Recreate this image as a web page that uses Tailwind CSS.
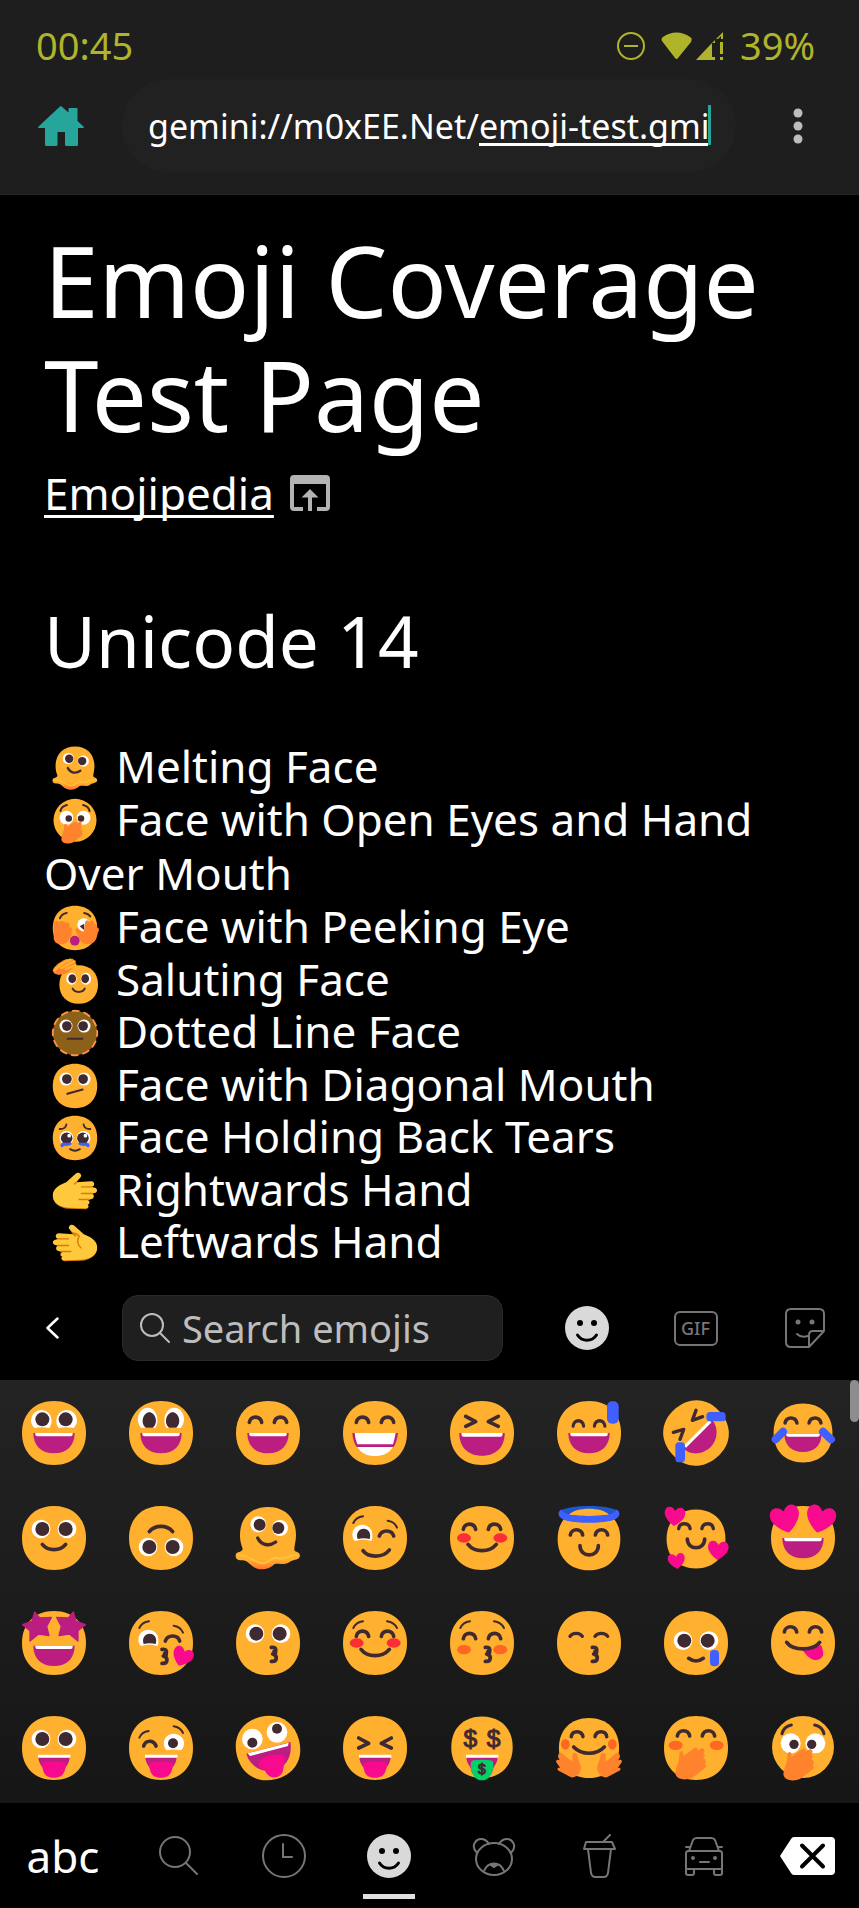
<!DOCTYPE html>
<html lang="en">
<head>
  <meta charset="UTF-8">
  <meta name="viewport" content="width=device-width, initial-scale=1">
  <title>Emoji Coverage Test Page</title>
  <script src="https://cdn.jsdelivr.net/npm/@tailwindcss/browser@4"></script>
</head>
<body class="bg-black text-white font-['Noto_Sans','Open_Sans',sans-serif] min-h-screen flex flex-col">

  <!-- shared emoji parts, drawn around 0,0 -->
  <svg class="absolute size-0" aria-hidden="true">
    <defs>
      <linearGradient id="goo" gradientUnits="userSpaceOnUse" x1="0" y1="40" x2="0" y2="96">
        <stop offset="0" stop-color="#FFB02E"/><stop offset=".45" stop-color="#FFB02E"/><stop offset="1" stop-color="#FF6F2D"/>
      </linearGradient>
      <path id="face" fill="#FFB02E" d="M0-96C58-96 96-58 96 0S58 96 0 96-96 58-96 0-58-96 0-96Z"/>
      <g id="eyes">
        <circle cx="-39" cy="0" r="28" fill="#fff"/><circle cx="39" cy="0" r="28" fill="#fff"/>
        <circle cx="-35" cy="0" r="21" fill="#402A32"/><circle cx="35" cy="0" r="21" fill="#402A32"/>
      </g>
      <path id="arcs" fill="none" stroke="#402A32" stroke-width="11" stroke-linecap="round" d="M-56 0C-53-21-23-21-19 0M19 0C23-21 53-21 56 0"/>
      <path id="squint" fill="none" stroke="#402A32" stroke-width="11" stroke-linecap="round" stroke-linejoin="round" d="M-49-50L-19-34L-49-20M49-50L19-34L49-20"/>
      <path id="brows" fill="none" stroke="#402A32" stroke-width="6" stroke-linecap="round" d="M-65-45Q-57-62-36-65M36-65Q57-62 66-45"/>
      <g id="laugh">
        <path fill="#BB1D80" d="M-62 0H62C62 38 38 61 0 61S-62 38-62 0Z"/>
        <path fill="#fff" d="M-56 0H56V4Q56 10 50 10H-50Q-56 10-56 4Z"/>
      </g>
      <path id="kiss" fill="none" stroke="#402A32" stroke-width="11" stroke-linecap="round" stroke-linejoin="round" d="M0 0C16-3 18 14 4 20C20 24 18 44 0 42M4 20C16 18 14 14 8 12"/>
      <path id="heart" fill="#F70A8D" d="M0 28C-14 20-31 4-31-11C-31-32-8-34 0-17C8-34 31-32 31-11C31 4 14 20 0 28Z"/>
      <path id="star" fill="#BB1D80" stroke="#BB1D80" stroke-width="4" stroke-linejoin="round" d="M-58-93L-43-75L-8-77L-22-50L-15-22L-46-27L-72-6L-72-37L-94-55L-66-66Z"/>
      <g id="tongue">
        <path fill="#BB1D80" d="M-47 26H47C46 44 38 56 28 64H-28C-38 56-46 44-47 26Z"/>
        <path fill="#fff" d="M-48 20H49V29H-48Z"/>
        <path fill="#F70A8D" d="M-37 50C-38 36 38 36 37 50C32 60 36 89 0 89S-32 60-37 50Z"/>
      </g>
      <g id="winkeye">
        <path fill="#fff" d="M-60 9C-65 4-68-3-68-10A30 30 0 0 1-8-10C-8-3-8 4-11 9Q-36 0-60 9Z"/>
        <path fill="#402A32" d="M-52 3C-58-14-48-28-34-28S-10-14-16 3Q-34-1-52 3Z"/>
      </g>
      <g id="melt">
        <path fill="url(#goo)" d="M0-93C52-93 84-60 84-8C84 12 78 26 79 36C82 44 96 40 96 54C94 66 78 64 68 70C52 84 40 74 20 78C5 94-20 98-38 90C-58 78-64 64-80 67C-94 68-100 58-96 48C-94 40-78 44-76 32C-80 20-84 10-84-8C-84-60-52-93 0-93Z"/>
        <path fill="none" stroke="#FFC23A" stroke-width="6" stroke-linecap="round" d="M-88 52C-58 46-42 78-14 76C10 72 8 56 28 60C50 68 62 50 86 52"/>
        <circle cx="-29" cy="-41" r="24" fill="#fff"/><circle cx="-25" cy="-40" r="18" fill="#402A32"/>
        <circle cx="36" cy="-30" r="24" fill="#fff"/><circle cx="31" cy="-30" r="18" fill="#402A32"/>
        <path fill="none" stroke="#402A32" stroke-width="10" stroke-linecap="round" d="M-31 0C-20 22 4 26 23 12"/>
      </g>
      <path id="palm" fill="#FF822D" d="M-50 20C-50 4-34 6-38 24L-8 2C0-5 8 0 4 8L14 2C24-3 30 8 21 16C28 18 28 28 20 30C32 34 30 44 26 47C32 53 30 58 24 62L-12 90C-30 98-60 96-62 76C-60 56-50 44-50 20Z"/>
      <path id="hug" fill="#FF822D" d="M-50 24C-52 12-34 12-34 24C-34 36-22 50-25 66C-28 80-42 90-54 88L-88 70C-98 66-96 56-86 60L-96 46C-102 38-96 32-88 37L-93 26C-92 12-84 12-78 18L-52 40Q-48 34-50 24Z"/>
      <g id="gasp">
        <circle cx="0" cy="-3" r="93" fill="#FFB02E"/>
        <path fill="none" stroke="#402A32" stroke-width="9" stroke-linecap="round" d="M-63-43Q-58-64-35-69M35-69Q58-64 63-43"/>
        <circle cx="-37" cy="-14" r="30" fill="#fff"/><circle cx="37" cy="-14" r="30" fill="#fff"/>
        <circle cx="-27" cy="-11" r="14" fill="#402A32"/><circle cx="26" cy="-11" r="14" fill="#402A32"/>
        <use href="#palm" x="3" y="3"/>
      </g>
      <g id="hand">
        <path fill="#D67D00" d="M-96 24C-94 50-70 76-24 77L48 79Q58 78 58 66L-20 50Z"/>
        <path fill="#FFC83D" d="M-96 18C-96-16-56-30-38-38L4-76C18-86 34-70 23-58L6-38L70-42C86-42 88-20 72-18L84-14C100-12 98 8 84 9L72 12C86 14 84 34 70 35L56 40C66 44 64 58 54 59C62 64 58 74 48 74L-20 72C-66 72-96 50-96 18Z"/>
        <path fill="none" stroke="#D67D00" stroke-width="6" stroke-linecap="round" d="M6-38L-2-30M28-18H74M28 11H76M18 37H62"/>
      </g>
      <g id="smiley">
        <circle cx="22" cy="22" r="22" fill="#D9D9D9"/>
        <circle cx="15" cy="17" r="3" fill="#000"/><circle cx="29" cy="17" r="3" fill="#000"/>
        <path d="M12.500 29C17 36 27 36 31.500 29" fill="none" stroke="#000" stroke-width="3" stroke-linecap="round"/>
      </g>
    </defs>
  </svg>

  <header class="bg-[#1e1e1e] border-b border-[#262626] pb-[22px]">
    <div class="flex items-center justify-between h-[79px] pt-3 pl-9 pr-11 text-[38px] text-[#afb42b]">
      <span>00:45</span>
      <div class="flex items-center">
        <svg class="size-7 mr-4" viewBox="0 0 28 28" fill="none" stroke="currentColor" stroke-width="2"><circle cx="14" cy="14" r="13"/><path d="M7 14h14"/></svg>
        <svg class="w-[31px] h-7 mr-1" viewBox="0 0 31 28" fill="currentColor"><path d="M1 9C0 7 1 6 2 5C10-1 21-1 29 5C31 6 31 8 30 10L17 26Q15.500 28 14 26Z"/></svg>
        <svg class="size-7 mr-4" viewBox="0 0 28 28" fill="currentColor"><path d="M0 28L14 13L19 8V11H16V25H19V28ZM20 7L27 0V7H25V4L22 7Z"/><path d="M24 10h3v12h-3zM24 25h3v3h-3z"/></svg>
        <span>39%</span>
      </div>
    </div>
    <div class="flex items-stretch h-[93px]">
      <button class="w-[122px] flex items-center justify-center" aria-label="Home">
        <svg class="w-[46px] h-10" viewBox="0 0 46 40" fill="#26a69a"><path d="M23 0L30.500 6.500V3Q30.500 2 31.500 2H38.500Q39.500 2 39.500 3V15L46 21Q46 22 45 22H40V38.500Q40 40 38.500 40H28.500Q27 40 27 38.500V26H19.500V38.500Q19.500 40 18 40H8.500Q7 40 7 38.500V22H1Q0 22 0 21L22 0.500Z"/></svg>
      </button>
      <div class="relative flex-1 min-w-0 rounded-full bg-[#212121]">
        <input type="text" aria-label="Address" value="gemini://m0xEE.Net/emoji-test.gmi" class="w-full h-full bg-transparent pl-[26px] text-[34px] outline-none">
        <span class="absolute left-[357px] top-16 w-[229px] h-[3px] bg-white"></span>
        <span class="absolute left-[586px] top-[26px] w-[3px] h-10 bg-[#26a69a]"></span>
      </div>
      <button class="w-[123px] flex items-center justify-center" aria-label="Menu">
        <svg class="w-[10px] h-9" viewBox="0 0 10 36" fill="#bdbdbd"><circle cx="5" cy="5" r="4.500"/><circle cx="5" cy="18" r="4.500"/><circle cx="5" cy="31" r="4.500"/></svg>
      </button>
    </div>
  </header>

  <main class="flex-1 px-11 pt-7 text-[44px]">
    <h1 class="text-[98px] leading-[114px]">Emoji Coverage Test Page</h1>
    <p class="mt-3 leading-[60px] flex items-center gap-4">
      <a href="https://emojipedia.org" class="underline decoration-[3px] underline-offset-[5px] [text-decoration-skip-ink:none]">Emojipedia</a>
      <svg class="w-10 h-9" viewBox="0 0 40 36" fill="#b3b3b3"><path d="M4 0H36Q40 0 40 4V32Q40 36 36 36H27V32H36V9H4V32H13V36H4Q0 36 0 32V4Q0 0 4 0Z"/><path d="M20 14L28.500 22.500H22V36H18V22.500H11.500Z"/></svg>
    </p>
    <h2 class="mt-[76px] text-[71px] leading-[84px]">Unicode 14</h2>
    <ul class="mt-[57px]">
      <li class="leading-[52px]"><svg class="inline-block size-[50px] ml-[6px] mr-4 -my-2 align-[-2px]" viewBox="-108 -108 216 216"><use href="#melt"/></svg>Melting Face</li>
      <li class="leading-[54px]"><svg class="inline-block size-[50px] ml-[6px] mr-4 -my-2 align-[-2px]" viewBox="-108 -108 216 216"><use href="#gasp"/></svg>Face with Open Eyes and Hand Over Mouth</li>
      <li class="leading-[53px]"><svg class="inline-block size-[50px] ml-[6px] mr-4 -my-2 align-[-2px]" viewBox="-108 -108 216 216">
        <use href="#face"/>
        <path fill="none" stroke="#402A32" stroke-width="9" stroke-linecap="round" d="M-65-42Q-58-62-36-65M40-65Q57-62 66-50"/>
        <circle cx="38" cy="-14" r="28" fill="#fff"/><path fill="#402A32" d="M20-8L40-18V10Z"/>
        <path fill="#FF822D" d="M-92-22C-88-34-74-30-66-24C-60-32-48-32-42-22C-30-28-18-16-26-4C-12-2-8 8-16 16C-8 30-22 40-26 52C-40 76-86 78-92 46Z"/>
        <path fill="#FF822D" d="M40 6L44-26C52-38 60-34 62-24C68-38 84-34 82-16C90-20 98-14 95-2C108 0 104 14 98 22C94 50 84 72 52 70C30 68 22 58 14 36L2 12C0 0 12-2 18 8L36 20Z"/>
        <circle cx="-1" cy="55" r="21" fill="#BB1D80"/></svg>Face with Peeking Eye</li>
      <li class="leading-[52px]"><svg class="inline-block size-[50px] ml-[6px] mr-4 -my-2 align-[-2px]" viewBox="-108 -108 216 216">
        <use href="#face" transform="translate(16 15) scale(.87)"/>
        <use href="#eyes" transform="translate(16 -10) scale(.8 .92)"/>
        <path fill="none" stroke="#402A32" stroke-width="9" stroke-linecap="round" d="M-10 33C0 52 32 52 42 33"/>
        <path fill="#FF822D" d="M-96-46C-92-64-64-84-40-94L-8-96L6-72L-4-60L-30-38C-50-24-80-24-92-36Z"/>
        <path fill="none" stroke="#FFB02E" stroke-width="11" stroke-linecap="round" d="M-88-46Q-66-72-40-84L-20-92M-58-56Q-30-74-2-84M-40-52L2-68"/></svg>Saluting Face</li>
      <li class="leading-[53px]"><svg class="inline-block size-[50px] ml-[6px] mr-4 -my-2 align-[-2px]" viewBox="-108 -108 216 216">
        <circle r="96" fill="#8C6019"/><circle r="96" fill="none" stroke="#FF9148" stroke-width="8" stroke-dasharray="27 23.270" stroke-linecap="round" stroke-dashoffset="13"/>
        <use href="#eyes" y="-30"/><path stroke="#402A32" stroke-width="9" stroke-linecap="round" d="M-32 25H32"/></svg>Dotted Line Face</li>
      <li class="leading-[52px]"><svg class="inline-block size-[50px] ml-[6px] mr-4 -my-2 align-[-2px]" viewBox="-108 -108 216 216">
        <use href="#face"/><use href="#eyes" y="-30"/><path stroke="#402A32" stroke-width="9" stroke-linecap="round" d="M-33 34L33 15"/></svg>Face with Diagonal Mouth</li>
      <li class="leading-[53px]"><svg class="inline-block size-[50px] ml-[6px] mr-4 -my-2 align-[-2px]" viewBox="-108 -108 216 216">
        <use href="#face"/>
        <circle cx="-37" cy="0" r="30" fill="#fff"/><circle cx="37" cy="0" r="30" fill="#fff"/>
        <circle cx="-36" cy="1" r="25" fill="#402A32"/><circle cx="34" cy="1" r="25" fill="#402A32"/>
        <circle cx="-25" cy="-10" r="8" fill="#fff"/><circle cx="45" cy="-10" r="8" fill="#fff"/>
        <path fill="#3F5FFF" d="M-54 20H-20Q-10 22-16 28Q-24 36-48 34L-50 38Q-60 44-63 32Q-62 22-54 20ZM54 20H20Q10 22 16 28Q24 36 48 34L50 38Q60 44 63 32Q62 22 54 20Z"/>
        <path fill="none" stroke="#402A32" stroke-width="8" stroke-linecap="round" d="M-66-39C-50-38-40-44-37-59M66-39C50-38 40-44 37-59M-21 48Q0 62 21 48"/></svg>Face Holding Back Tears</li>
      <li class="leading-[52px]"><svg class="inline-block size-[50px] ml-[6px] mr-4 -my-2 align-[-2px]" viewBox="-108 -108 216 216"><use href="#hand"/></svg>Rightwards Hand</li>
      <li class="leading-[53px]"><svg class="inline-block size-[50px] ml-[6px] mr-4 -my-2 align-[-2px]" viewBox="-108 -108 216 216">
        <use href="#hand" transform="scale(-1 1)"/>
        <path fill="none" stroke="#D67D00" stroke-width="6" stroke-linecap="round" d="M-12-44Q6-42 18-30Q2-2 25 21"/></svg>Leftwards Hand</li>
    </ul>
  </main>

  <section aria-label="Emoji keyboard">
    <div class="flex items-center h-[104px]">
      <button class="w-[104px] h-full flex items-center justify-center" aria-label="Back">
        <svg class="w-[13px] h-[22px]" viewBox="0 0 13 22" fill="none" stroke="#fff" stroke-width="2.500" stroke-linecap="round" stroke-linejoin="round"><path d="M11.500 1.500L1.500 11L11.500 20.500"/></svg>
      </button>
      <label class="ml-[18px] mr-[29px] flex-1 min-w-0 h-[66px] flex items-center gap-3 pl-[17px] rounded-2xl border border-[#2a2a2a] bg-[#1f1f1f]">
        <svg class="size-[30px] shrink-0" viewBox="0 0 30 30" fill="none" stroke="#bdbdbd" stroke-width="2" stroke-linecap="round"><circle cx="12" cy="12" r="11"/><path d="M20 20L29 29"/></svg>
        <input type="text" placeholder="Search emojis" aria-label="Search emojis" class="w-full min-w-0 bg-transparent text-[38px] leading-[52px] placeholder:text-[#bdbdbd] outline-none">
      </label>
      <div class="grid grid-cols-3 w-[327px] h-full">
        <button class="flex items-center justify-center" aria-label="Emoji"><svg class="size-11" viewBox="0 0 44 44"><use href="#smiley"/></svg></button>
        <button class="flex items-center justify-center" aria-label="GIF"><span class="w-11 h-[35px] rounded-md border-2 border-[#767676] text-[#767676] text-[18px] leading-[31px] font-medium">GIF</span></button>
        <button class="flex items-center justify-center" aria-label="Stickers">
          <svg class="size-10" viewBox="0 0 40 40" fill="none" stroke="#767676" stroke-width="2" stroke-linecap="round" stroke-linejoin="round"><path d="M6 1H34Q39 1 39 6V23L24 39H6Q1 39 1 34V6Q1 1 6 1ZM24 39V27Q24 23 28 23H39M12 26Q16 30 23 28"/><circle cx="13" cy="14" r="1.500" fill="#767676"/><circle cx="27" cy="14" r="1.500" fill="#767676"/></svg>
        </button>
      </div>
    </div>

    <div class="relative h-[423px] bg-linear-to-b from-[#232323] to-[#161616]">
      <span class="absolute right-0 top-0 w-[9px] h-[42px] rounded-full bg-[#8d8d8d]"></span>
      <div class="grid grid-cols-8 auto-rows-[105px] pr-[2px] *:flex *:items-center *:justify-center">
        <button aria-label="Grinning face"><svg class="size-[72px]" viewBox="-108 -108 216 216"><use href="#face"/>
          <path fill="#fff" d="M-59-15C-66-22-69-30-69-38A31 31 0 0 1-7-38C-7-30-9-22-14-15Q-36-19-59-15ZM59-15C66-22 69-30 69-38A31 31 0 0 0 7-38C7-30 9-22 14-15Q36-19 59-15Z"/>
          <circle cx="-35" cy="-41" r="21" fill="#402A32"/><circle cx="35" cy="-41" r="21" fill="#402A32"/><use href="#laugh"/></svg></button>
        <button aria-label="Grinning face with big eyes"><svg class="size-[72px]" viewBox="-108 -108 216 216"><use href="#face"/>
          <path fill="#fff" d="M-59-15C-80-38-66-76-40-76S-2-38-17-15ZM59-15C80-38 66-76 40-76S2-38 17-15Z"/>
          <path fill="#402A32" d="M-46-16C-64-32-52-62-35-62S-6-32-24-16ZM46-16C64-32 52-62 35-62S6-32 24-16Z"/><use href="#laugh"/></svg></button>
        <button aria-label="Grinning face with smiling eyes"><svg class="size-[72px]" viewBox="-108 -108 216 216"><use href="#face"/><use href="#arcs" y="-32"/><use href="#laugh"/></svg></button>
        <button aria-label="Beaming face"><svg class="size-[72px]" viewBox="-108 -108 216 216"><use href="#face"/><use href="#arcs" y="-32"/>
          <path fill="#BB1D80" d="M-68 0H69Q66 28 55 43H-54Q-66 28-68 0Z"/>
          <path fill="#fff" d="M-61 0H62Q58 22 54 34H-53Q-59 20-61 0ZM-53 42H54C42 62 22 69 0 69S-41 62-53 42Z"/></svg></button>
        <button aria-label="Squinting face"><svg class="size-[72px]" viewBox="-108 -108 216 216"><use href="#face"/><use href="#squint"/><use href="#laugh" transform="scale(1.100 1.120)"/></svg></button>
        <button aria-label="Grinning face with sweat"><svg class="size-[72px]" viewBox="-108 -108 216 216"><use href="#face"/><use href="#arcs" transform="translate(0 -21) scale(.85 1)"/><use href="#laugh"/>
          <rect x="54" y="-95" width="35" height="67" rx="15" fill="#3F5FFF"/></svg></button>
        <button aria-label="Rolling on the floor laughing"><svg class="size-[72px]" viewBox="-108 -108 216 216"><use href="#face" transform="rotate(-40)"/>
          <path fill="#BB1D80" d="M-38 46L48-40C68-18 66 20 44 42S-16 70-38 46Z"/><path stroke="#fff" stroke-width="9" d="M-33 41L43-35"/>
          <path fill="none" stroke="#402A32" stroke-width="10" stroke-linecap="round" stroke-linejoin="round" d="M0-68L-11-38L20-49M-68-2L-37-11L-48 19"/>
          <rect x="31" y="-63" width="58" height="28" rx="11" fill="#3F5FFF"/><rect x="-62" y="28" width="29" height="60" rx="11" fill="#3F5FFF"/></svg></button>
        <button aria-label="Tears of joy"><svg class="size-[72px]" viewBox="-108 -108 216 216"><use href="#face" transform="scale(.92)"/><use href="#arcs" transform="translate(0 -30) scale(.96)"/><use href="#laugh" transform="translate(0 2) scale(.9)"/>
          <path stroke="#3F5FFF" stroke-width="24" stroke-linecap="round" d="M-60-4L-82 19M60-4L84 19"/></svg></button>

        <button aria-label="Slightly smiling face"><svg class="size-[72px]" viewBox="-108 -108 216 216"><use href="#face"/><use href="#eyes" y="-27"/><path fill="none" stroke="#402A32" stroke-width="11" stroke-linecap="round" d="M-35 19C-18 40 18 40 35 19"/></svg></button>
        <button aria-label="Upside-down face"><svg class="size-[72px]" viewBox="-108 -108 216 216"><g transform="scale(1 -1)"><use href="#face"/><use href="#eyes" y="-27"/><path fill="none" stroke="#402A32" stroke-width="11" stroke-linecap="round" d="M-35 19C-18 40 18 40 35 19"/></g></svg></button>
        <button aria-label="Melting face"><svg class="size-[72px]" viewBox="-108 -108 216 216"><use href="#melt"/></svg></button>
        <button aria-label="Winking face"><svg class="size-[72px]" viewBox="-108 -108 216 216"><use href="#face"/><use href="#winkeye"/>
          <path fill="none" stroke="#402A32" stroke-width="6" stroke-linecap="round" d="M-65-45Q-57-62-36-65M38-52Q58-50 66-31"/>
          <path fill="none" stroke="#402A32" stroke-width="11" stroke-linecap="round" d="M13-6C20-26 50-26 56-6M-36 38C-20 60 25 60 43 36"/></svg></button>
        <button aria-label="Smiling face with smiling eyes"><svg class="size-[72px]" viewBox="-108 -108 216 216"><use href="#face"/><use href="#arcs" y="-26"/>
          <ellipse cx="-54" cy="0" rx="21" ry="14" fill="#F92F35"/><ellipse cx="55" cy="0" rx="21" ry="14" fill="#F92F35"/>
          <path fill="none" stroke="#402A32" stroke-width="11" stroke-linecap="round" d="M-42 19C-22 44 22 44 43 19"/></svg></button>
        <button aria-label="Smiling face with halo"><svg class="size-[72px]" viewBox="-108 -108 216 216"><use href="#face" transform="translate(0 3) scale(.98)"/>
          <path fill="#1D57D0" fill-rule="evenodd" d="M-91-73C-91-104 91-104 91-73S-91-42-91-73ZM-62-70C-40-94 40-94 62-70Q0-62-62-70Z"/>
          <path fill="#3F5FFF" d="M-91-73C-91-52-50-46 0-46S91-52 91-73C91-80 86-84 80-86C84-72 50-66 0-66S-84-72-80-86C-86-84-91-80-91-73Z"/>
          <use href="#arcs" y="-9"/><path fill="none" stroke="#402A32" stroke-width="11" stroke-linecap="round" d="M-27 23C-27 60 28 60 28 23"/></svg></button>
        <button aria-label="Smiling face with hearts"><svg class="size-[72px]" viewBox="-108 -108 216 216"><use href="#face" transform="translate(0 3) scale(.92)"/><use href="#arcs" transform="translate(0 -28) scale(.93)"/>
          <path fill="none" stroke="#402A32" stroke-width="11" stroke-linecap="round" d="M-26 3C-26 38 26 38 26 3"/>
          <use href="#heart" transform="translate(-64 -64) rotate(5)"/><use href="#heart" transform="translate(66 38) rotate(5)"/><use href="#heart" transform="translate(-58 70) scale(.82) rotate(-8)"/></svg></button>
        <button aria-label="Heart eyes"><svg class="size-[72px]" viewBox="-108 -108 216 216"><use href="#face"/><use href="#laugh"/>
          <use href="#heart" transform="translate(-52 -55) rotate(-14) scale(1.420)"/><use href="#heart" transform="translate(52 -55) rotate(14) scale(1.420)"/></svg></button>

        <button aria-label="Star-struck"><svg class="size-[72px]" viewBox="-108 -108 216 216"><use href="#face"/><use href="#star"/><use href="#star" transform="scale(-1 1)"/><use href="#laugh" y="8"/></svg></button>
        <button aria-label="Blowing a kiss"><svg class="size-[72px]" viewBox="-108 -108 216 216"><use href="#face"/><use href="#winkeye"/>
          <path fill="none" stroke="#402A32" stroke-width="6" stroke-linecap="round" d="M-65-45Q-57-62-36-65M38-52Q58-50 66-31"/>
          <path fill="none" stroke="#402A32" stroke-width="11" stroke-linecap="round" d="M13-6C20-26 50-26 56-6"/>
          <use href="#kiss" x="3" y="19"/><use href="#heart" transform="translate(64 42) rotate(22)"/></svg></button>
        <button aria-label="Kissing face"><svg class="size-[72px]" viewBox="-108 -108 216 216"><use href="#face"/><use href="#eyes" y="-28"/><use href="#kiss" x="10" y="13"/></svg></button>
        <button aria-label="Smiling face"><svg class="size-[72px]" viewBox="-108 -108 216 216"><use href="#face"/><use href="#brows"/><use href="#arcs" y="-20"/>
          <ellipse cx="-55" cy="0" rx="21" ry="14" fill="#F92F35"/><ellipse cx="56" cy="0" rx="21" ry="14" fill="#F92F35"/>
          <path fill="none" stroke="#402A32" stroke-width="11" stroke-linecap="round" d="M-42 19C-22 44 22 44 43 19"/></svg></button>
        <button aria-label="Kissing face with closed eyes"><svg class="size-[72px]" viewBox="-108 -108 216 216"><use href="#face"/><use href="#brows"/><use href="#arcs" y="-13"/>
          <ellipse cx="-54" cy="20" rx="21" ry="14" fill="#FF6723"/><ellipse cx="55" cy="20" rx="21" ry="14" fill="#FF6723"/><use href="#kiss" x="10" y="13"/></svg></button>
        <button aria-label="Kissing face with smiling eyes"><svg class="size-[72px]" viewBox="-108 -108 216 216"><use href="#face"/><use href="#kiss" x="10" y="13"/>
          <path fill="none" stroke="#402A32" stroke-width="10" stroke-linecap="round" d="M-57-20C-50-32-27-32-20-20M18-20C26-32 48-32 56-20"/></svg></button>
        <button aria-label="Smiling face with tear"><svg class="size-[72px]" viewBox="-108 -108 216 216"><use href="#face"/><use href="#eyes" y="-7"/>
          <rect x="42" y="21" width="27" height="49" rx="12" fill="#3F5FFF"/><path fill="none" stroke="#402A32" stroke-width="11" stroke-linecap="round" d="M-22 46Q0 62 22 46"/></svg></button>
        <button aria-label="Savoring food"><svg class="size-[72px]" viewBox="-108 -108 216 216"><use href="#face"/><use href="#arcs" y="-33"/>
          <path fill="#F70A8D" d="M-2 20L54 6C60 22 66 36 54 46C38 58 18 50-2 20Z"/>
          <path fill="none" stroke="#402A32" stroke-width="11" stroke-linecap="round" d="M-49-2C-30 24 30 24 50-2"/></svg></button>

        <button aria-label="Face with tongue"><svg class="size-[72px]" viewBox="-108 -108 216 216"><use href="#face"/><use href="#eyes" y="-27"/><use href="#tongue"/></svg></button>
        <button aria-label="Winking face with tongue"><svg class="size-[72px]" viewBox="-108 -108 216 216"><use href="#face"/>
          <path fill="#fff" d="M17 7C-2-16 14-43 38-43S82-16 60 7Q38 2 17 7Z"/><circle cx="36" cy="-14" r="15" fill="#402A32"/>
          <path fill="none" stroke="#402A32" stroke-width="6" stroke-linecap="round" d="M-65-31Q-58-48-37-51M38-65Q58-62 66-45"/>
          <path fill="none" stroke="#402A32" stroke-width="11" stroke-linecap="round" d="M-52-6C-46-25-22-25-15-6"/><use href="#tongue"/></svg></button>
        <button aria-label="Zany face"><svg class="size-[72px]" viewBox="-108 -108 216 216"><use href="#face" transform="rotate(-15)"/>
          <circle cx="-47" cy="-27" r="31" fill="#fff"/><circle cx="27" cy="-47" r="31" fill="#fff"/><circle cx="-47" cy="-16" r="15" fill="#402A32"/><circle cx="27" cy="-58" r="15" fill="#402A32"/>
          <path fill="#BB1D80" d="M-65 17L67-18C74 24 54 58 20 68C-10 74-52 62-65 17Z"/><path fill="#fff" d="M-61 16L62-16L60-6L-54 24Z"/>
          <path fill="#F70A8D" d="M-28 50C-30 34-10 26 8 22S50 18 52 30C44 50 52 78 30 86S-4 80-10 66C-20 62-28 60-28 50Z"/></svg></button>
        <button aria-label="Squinting face with tongue"><svg class="size-[72px]" viewBox="-108 -108 216 216"><use href="#face"/><use href="#squint" y="20"/><use href="#tongue"/></svg></button>
        <button aria-label="Money-mouth face"><svg class="size-[72px]" viewBox="-108 -108 216 216"><use href="#face" transform="translate(0 -2) scale(.96)"/><use href="#tongue"/>
          <path fill="#00D26A" d="M-33 42Q-33 35 0 35T33 42C36 60 30 97 0 97S-36 60-33 42Z"/>
          <g fill="#402A32" stroke="#402A32" stroke-width="3" text-anchor="middle" class="font-['Liberation_Sans',sans-serif]"><text x="-35" y="-4" font-size="74">$</text><text x="35" y="-4" font-size="74">$</text><text x="0" y="78" font-size="42">$</text></g></svg></button>
        <button aria-label="Hugging face"><svg class="size-[72px]" viewBox="-108 -108 216 216"><use href="#face" transform="scale(.94)"/><use href="#arcs" transform="translate(0 -34) scale(.95)"/>
          <ellipse cx="-71" cy="-11" rx="13" ry="16" fill="#FF6723"/><ellipse cx="70" cy="-11" rx="13" ry="16" fill="#FF6723"/>
          <path fill="none" stroke="#402A32" stroke-width="11" stroke-linecap="round" d="M-46-3C-22 22 22 22 46-3"/><use href="#hug"/><use href="#hug" transform="scale(-1 1)"/></svg></button>
        <button aria-label="Hand over mouth"><svg class="size-[72px]" viewBox="-108 -108 216 216"><use href="#face"/><use href="#arcs" y="-36"/>
          <ellipse cx="-61" cy="-8" rx="21" ry="14" fill="#FF6723"/><ellipse cx="62" cy="-8" rx="21" ry="14" fill="#FF6723"/><use href="#palm"/></svg></button>
        <button aria-label="Open eyes and hand over mouth"><svg class="size-[72px]" viewBox="-108 -108 216 216"><use href="#gasp"/></svg></button>
      </div>
    </div>

    <nav class="flex h-[105px] text-[#767676]">
      <button class="w-[126px] text-[44px] leading-[60px] text-white">abc</button>
      <button class="flex-1 flex items-center justify-center" aria-label="Search"><svg class="size-11" viewBox="0 0 44 44" fill="none" stroke="currentColor" stroke-width="2" stroke-linecap="round"><circle cx="18" cy="18" r="15"/><path d="M29 29L40 40"/></svg></button>
      <button class="flex-1 flex items-center justify-center" aria-label="Recent"><svg class="size-11" viewBox="0 0 44 44" fill="none" stroke="currentColor" stroke-width="2" stroke-linecap="round"><circle cx="22" cy="22" r="21"/><path d="M21 10V23H30"/></svg></button>
      <button class="relative flex-1 flex items-center justify-center" aria-label="Smileys"><svg class="size-11" viewBox="0 0 44 44"><use href="#smiley"/></svg><span class="absolute bottom-[9px] w-[52px] h-[5px] bg-[#e0e0e0]"></span></button>
      <button class="flex-1 flex items-center justify-center" aria-label="Animals"><svg class="size-11" viewBox="0 0 44 44" fill="none" stroke="currentColor" stroke-width="2" stroke-linecap="round"><ellipse cx="22" cy="25" rx="18" ry="16"/><path d="M5 19C-2 12 4 5 9 5Q14 5 17 10M39 19C46 12 40 5 35 5Q30 5 27 10M12 37C16 27 28 27 32 37"/><path d="M19 31H25L22 33Z" fill="currentColor"/></svg></button>
      <button class="flex-1 flex items-center justify-center" aria-label="Food"><svg class="size-11" viewBox="0 0 44 44" fill="none" stroke="currentColor" stroke-width="2" stroke-linecap="round" stroke-linejoin="round"><path d="M9 8H35L38 15H7ZM11 15L14 39Q15 43 18 43H27Q30 43 31 39L34 15M27 7L33 1"/></svg></button>
      <button class="flex-1 flex items-center justify-center" aria-label="Travel"><svg class="size-11" viewBox="0 0 44 44" fill="none" stroke="currentColor" stroke-width="2" stroke-linecap="round" stroke-linejoin="round"><path d="M7 17L11 6Q12 4 15 4H29Q32 4 33 6L37 17M4 13H8M36 13H40M6 17H38Q40 17 40 20V35H4V20Q4 17 6 17ZM4 35V39Q4 41 6 41H10Q12 41 12 39V35M32 35V39Q32 41 34 41H38Q40 41 40 39V35M18 28H27"/><circle cx="11" cy="24" r="1" fill="currentColor"/><circle cx="33" cy="24" r="1" fill="currentColor"/></svg></button>
      <button class="w-[103px] flex items-center justify-center" aria-label="Backspace"><svg class="w-[55px] h-[38px]" viewBox="0 0 55 38"><path fill="#fff" d="M14 0H51Q55 0 55 4V34Q55 38 51 38H14Q12 38 11 36L0 19L11 2Q12 0 14 0Z"/><path stroke="#000" stroke-width="4" stroke-linecap="round" d="M22 8.500L43 29.500M43 8.500L22 29.500"/></svg></button>
    </nav>
  </section>

</body>
</html>
